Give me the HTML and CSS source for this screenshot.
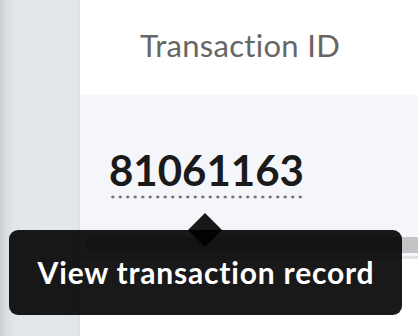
FILE: index.html
```html
<!DOCTYPE html>
<html>
<head>
<meta charset="utf-8">
<link rel="stylesheet" href="styles.css">
</head>
<body>
<div class="page">
  <aside class="sidebar"></aside>
  <main class="main">
    <div class="head">Transaction ID</div>
    <div class="cell">
      <span class="txid">81061163</span>
    </div>
    <div class="scroll"><div class="thumb"></div></div>
    <div class="rest"></div>
  </main>
</div>
<div class="tip-arrow"></div>
<div class="tooltip">View transaction record</div>
</body>
</html>
```
FILE: styles.css
```css
html, body {
  margin: 0;
  padding: 0;
  width: 418px;
  height: 336px;
  overflow: hidden;
  font-family: "Lato", "Open Sans", sans-serif;
}
.page {
  display: flex;
  height: 336px;
}
.sidebar {
  width: 80px;
  flex: none;
  background: linear-gradient(to right, #c9cdd0 0px, #dadde0 6px, #e3e6e9 14px, #e5e8eb 60px, #e3e6e9 77px, #dcdfe2 80px);
}
.main {
  flex: 1;
  display: flex;
  flex-direction: column;
  background: #fff;
}
.head {
  height: 95px;
  display: flex;
  align-items: center;
  justify-content: center;
  color: #666;
  font-size: 31px;
  letter-spacing: 0.3px;
  padding-right: 18px;
  box-sizing: border-box;
  padding-bottom: 6px;
}
.cell {
  background: #f5f6fa;
  height: 142px;
  padding-left: 29px;
  padding-top: 52px;
  box-sizing: border-box;
}
.txid {
  display: inline-block;
  font-size: 42px;
  font-weight: 700;
  color: #1a1a1a;
  line-height: 46px;
  padding-bottom: 6px;
  background-image: radial-gradient(circle, #6a6a6a 1.3px, transparent 1.7px);
  background-size: 7.5px 4px;
  background-repeat: repeat-x;
  background-position: 0 bottom;
}
.scroll {
  height: 16px;
  background: #f5f6fa;
  padding-left: 5px;
}
.thumb {
  height: 16px;
  background: #c4c4c7;
  border-radius: 8px 0 0 8px;
}
.rest {
  flex: 1;
  background: #fff;
  border-top: 3px solid #f5f6fa;
  box-shadow: inset 0 3px 0 #e2e2e4;
}
.tooltip {
  position: absolute;
  left: 9px;
  top: 230px;
  width: 393px;
  height: 85px;
  border-radius: 9px;
  background: rgba(0, 0, 0, 0.9);
  color: #fff;
  font-size: 30px;
  font-weight: 700;
  letter-spacing: 0.8px;
  display: flex;
  align-items: center;
  justify-content: center;
  padding-bottom: 1px;
  padding-left: 1px;
  box-sizing: border-box;
}
.tip-arrow {
  position: absolute;
  left: 193px;
  top: 218px;
  width: 24px;
  height: 24px;
  background: rgba(0, 0, 0, 0.9);
  transform: rotate(45deg);
}
```
